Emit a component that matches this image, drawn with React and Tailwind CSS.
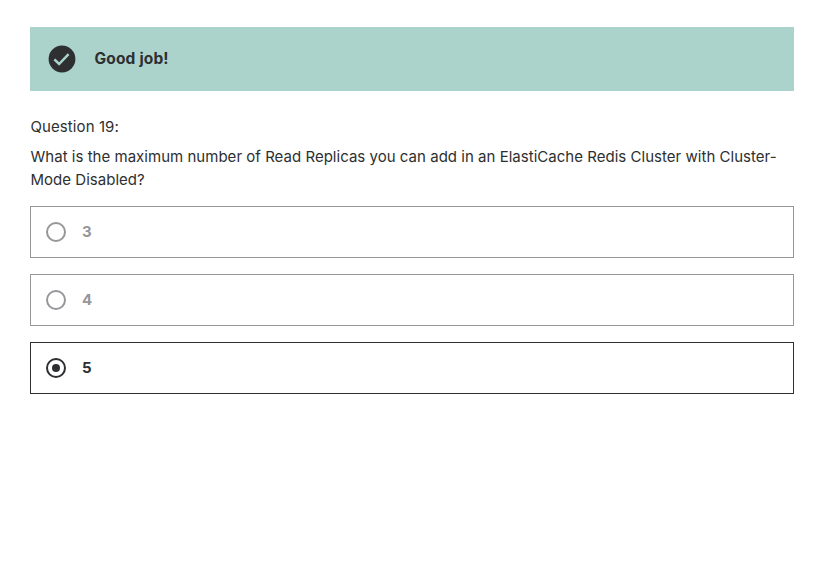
const answers = [
  { label: "3", selected: false },
  { label: "4", selected: false },
  { label: "5", selected: true },
];

function CheckBadge() {
  return (
    <svg viewBox="0 0 28 28" className="size-7 shrink-0">
      <circle cx="14" cy="14" r="13.4" fill="#2d2f31" />
      <path d="M6.4 14.3 L11.1 19 L20.6 9.2" fill="none" stroke="#acd2cc" strokeWidth="2.5" />
    </svg>
  );
}

function Answer({ label, selected }) {
  return (
    <div
      className={
        selected
          ? "flex h-[52px] items-center border border-[#2d2f31] pl-[15px] text-[#2d2f31]"
          : "flex h-[52px] items-center border border-[#96979a] pl-[15px] text-[#96979a]"
      }
    >
      <span className="flex size-5 items-center justify-center rounded-full border-2 border-current">
        {selected && <span className="size-2 rounded-full bg-current" />}
      </span>
      <span className="ml-4 text-[15px] leading-[22px] font-bold">{label}</span>
    </div>
  );
}

export default function App() {
  return (
    <main className="h-[575px] w-[836px] bg-white pt-[27px] pr-[42px] pl-[30px] font-['Inter',sans-serif] text-[15px] text-[#2d2f31]">
      <div className="flex h-16 items-center bg-[#acd2cc] pl-[18px]">
        <CheckBadge />
        <span className="ml-[18.5px] text-[15.5px] font-bold tracking-[0.16px]">Good job!</span>
      </div>
      <div className="mt-6 pl-[0.5px] leading-[23px] tracking-[0.09px]">Question 19:</div>
      <div className="mt-[7px] pl-[0.5px] leading-[23px] tracking-[0.025px]">
        <div className="whitespace-nowrap">
          What is the maximum number of Read Replicas you can add in an ElastiCache Redis Cluster with Cluster-
        </div>
        <div>Mode Disabled?</div>
      </div>
      <div className="mt-[15px] flex flex-col gap-4">
        {answers.map((a) => (
          <Answer key={a.label} {...a} />
        ))}
      </div>
    </main>
  );
}
